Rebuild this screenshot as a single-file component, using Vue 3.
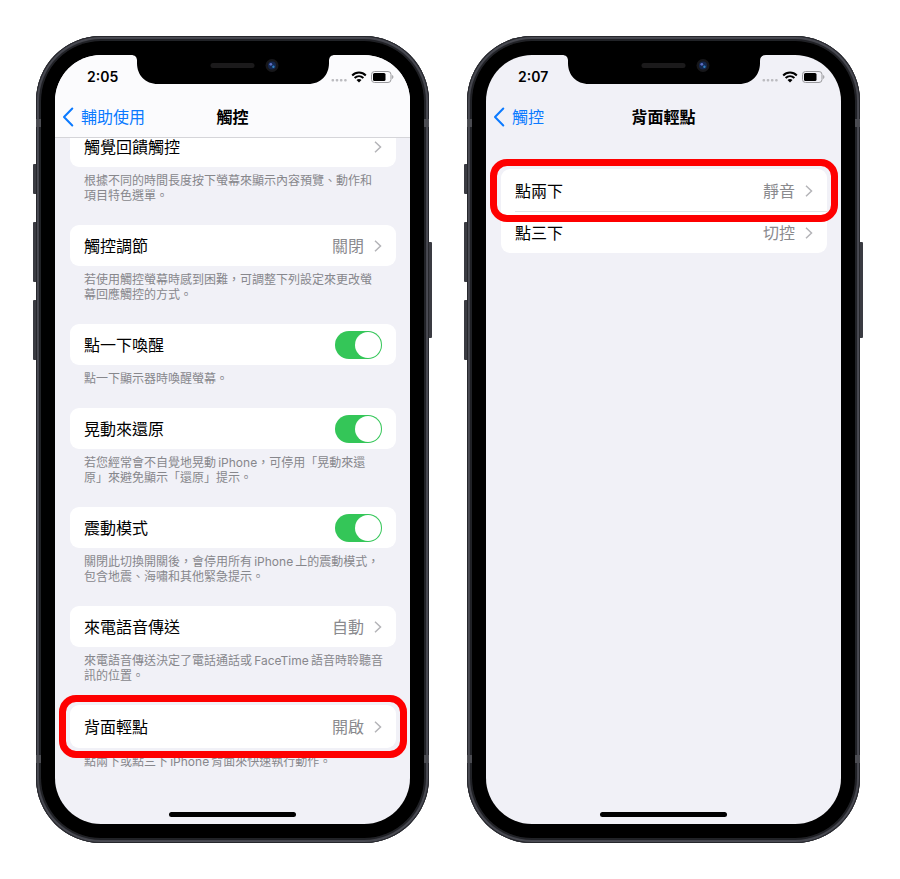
<script setup>
import { ref } from 'vue'

const phones = ref([
  {
    id: 'touch',
    time: '2:05',
    back: '輔助使用',
    title: '觸控',
    scrolled: true,
    groups: [
      {
        rows: [{ label: '觸覺回饋觸控', value: '' }],
        note: '根據不同的時間長度按下螢幕來顯示內容預覽、動作和項目特色選單。'
      },
      {
        rows: [{ label: '觸控調節', value: '關閉' }],
        note: '若使用觸控螢幕時感到困難，可調整下列設定來更改螢幕回應觸控的方式。'
      },
      {
        rows: [{ label: '點一下喚醒', toggle: true, on: true }],
        note: '點一下顯示器時喚醒螢幕。'
      },
      {
        rows: [{ label: '晃動來還原', toggle: true, on: true }],
        note: '若您經常會不自覺地晃動\u2009iPhone，可停用「晃動來還原」來避免顯示「還原」提示。'
      },
      {
        rows: [{ label: '震動模式', toggle: true, on: true }],
        note: '關閉此切換開關後，會停用所有\u2009iPhone\u2009上的震動模式，包含地震、海嘯和其他緊急提示。'
      },
      {
        rows: [{ label: '來電語音傳送', value: '自動' }],
        note: '來電語音傳送決定了電話通話或\u2009FaceTime\u2009語音時聆聽音訊的位置。'
      },
      {
        rows: [{ label: '背面輕點', value: '開啟', marked: true }],
        note: '點兩下或點三下\u2009iPhone\u2009背面來快速執行動作。'
      }
    ]
  },
  {
    id: 'backtap',
    time: '2:07',
    back: '觸控',
    title: '背面輕點',
    scrolled: false,
    groups: [
      {
        rows: [
          { label: '點兩下', value: '靜音', marked: true },
          { label: '點三下', value: '切控' }
        ],
        note: ''
      }
    ]
  }
])
</script>

<template>
  <main class="stage">
    <section v-for="phone in phones" :key="phone.id" class="phone">
      <span class="key key-mute"></span>
      <span class="key key-up"></span>
      <span class="key key-down"></span>
      <span class="key key-power"></span>
      <span class="band band-left"></span>
      <span class="band band-right"></span>
      <span class="band band-left band-low"></span>
      <span class="band band-right band-low"></span>
      <div class="bezel">
        <div class="screen">
          <header class="top" :class="{ scrolled: phone.scrolled }">
            <div class="status">
              <span class="time">{{ phone.time }}</span>
              <span class="indicators">
                <svg class="dots" viewBox="0 0 16 3" aria-hidden="true">
                  <rect x="0.5" y="0" width="2.6" height="2.6" rx="1" />
                  <rect x="4.7" y="0" width="2.6" height="2.6" rx="1" />
                  <rect x="8.900" y="0" width="2.6" height="2.6" rx="1" />
                  <rect x="13.1" y="0" width="2.6" height="2.6" rx="1" />
                </svg>
                <svg class="wifi" viewBox="0 0 16 12" aria-hidden="true">
                  <path d="M1.2 4.5C5 .6 11 .6 14.8 4.5" />
                  <path d="M3.6 7C6.2 4.5 9.8 4.5 12.4 7" />
                  <path class="solid" d="M5.5 9C7 7.7 9 7.7 10.5 9L8 11.6Z" />
                </svg>
                <svg class="battery" viewBox="0 0 23 12" aria-hidden="true">
                  <rect class="shell" x=".5" y=".5" width="19.5" height="11" rx="3" />
                  <rect x="2" y="2" width="12.5" height="8" rx="1.5" />
                  <path class="tip" d="M21.2 4C22.8 4.5 22.8 7.500 21.2 8Z" />
                </svg>
              </span>
            </div>
            <nav class="bar">
              <a class="back" href="#">
                <svg viewBox="0 0 12 20" aria-hidden="true"><path d="M10.300 1.500L2 10L10.300 18.500" /></svg>
                <span>{{ phone.back }}</span>
              </a>
              <h1 class="title">{{ phone.title }}</h1>
            </nav>
          </header>

          <div class="list" :class="{ under: phone.scrolled }">
            <section v-for="(group, g) in phone.groups" :key="g" class="group">
              <div class="card">
                <template v-for="row in group.rows" :key="row.label">
                  <label v-if="row.toggle" class="row">
                    <span class="label">{{ row.label }}</span>
                    <input v-model="row.on" class="switch" type="checkbox" role="switch" />
                  </label>
                  <a v-else class="row" :class="{ marked: row.marked }" href="#">
                    <span class="label">{{ row.label }}</span>
                    <span class="value">{{ row.value }}</span>
                    <svg class="chevron" viewBox="0 0 8 12" aria-hidden="true"><path d="M1 .8L6.500 6L1 11.200" /></svg>
                  </a>
                </template>
              </div>
              <p v-if="group.note" class="note">{{ group.note }}</p>
            </section>
          </div>

          <div class="home"></div>

          <svg class="notch" viewBox="0 0 204 30" aria-hidden="true">
            <path d="M0 0C4 0 6 2 6 6V8C6 20 14 29 27 29H177C190 29 198 20 198 8V6C198 2 200 0 204 0Z" />
            <rect class="speaker" x="79.500" y="8" width="44" height="5" rx="2.500" />
            <circle class="ring" cx="141" cy="10.500" r="6.500" />
            <circle class="lens" cx="141" cy="10.500" r="4" />
            <circle class="glow" cx="139.800" cy="9.300" r="1.400" />
            <circle class="glint" cx="142.400" cy="11.700" r="1.200" />
          </svg>
        </div>
      </div>
    </section>
  </main>
</template>

<style>
body {
  margin: 0;
  background: #fff;
}
</style>

<style scoped>
.stage {
  box-sizing: border-box;
  min-height: 100vh;
  display: flex;
  gap: 38px;
  padding: 36px 40px 36px 36px;
  font-family: Inter, "Noto Sans CJK TC", sans-serif;
  color: #000;
}

.phone {
  position: relative;
  flex: 1;
  min-width: 0;
  display: flex;
  box-sizing: border-box;
  padding: 5px;
  border-radius: 65px;
  background: #34353c;
  box-shadow: inset 0 0 0 1px #26272c, inset 0 0 1px 3px #4a4b53, inset 0 0 2px 5px #1c1d21;
}

.bezel {
  flex: 1;
  min-width: 0;
  display: flex;
  padding: 14px;
  border-radius: 60px;
  background: #000;
}

.screen {
  position: relative;
  flex: 1;
  min-width: 0;
  display: flex;
  flex-direction: column;
  overflow: hidden;
  border-radius: 46px;
  background: #f1f1f7;
}

.key {
  position: absolute;
  left: -3px;
  width: 3px;
  background: #3a3b42;
  border-radius: 1px 0 0 1px;
}

.key-mute {
  top: 128px;
  height: 30px;
}

.key-up {
  top: 186px;
  height: 60px;
}

.key-down {
  top: 264px;
  height: 60px;
}

.key-power {
  left: auto;
  right: -3px;
  top: 206px;
  height: 96px;
  border-radius: 0 1px 1px 0;
}

.band {
  position: absolute;
  top: 83px;
  width: 5px;
  height: 8px;
  background: #4b4c52;
}

.band-left {
  left: 0;
}

.band-right {
  right: 0;
}

.band-low {
  top: auto;
  bottom: 80px;
}

.notch {
  position: absolute;
  z-index: 3;
  top: 0;
  left: 50%;
  width: 204px;
  height: 30px;
  margin-left: -102px;
}

.speaker {
  fill: #1b1a1b;
}

.ring {
  fill: #17171a;
}

.lens {
  fill: #14264d;
}

.glow {
  fill: #5b6fc4;
}

.glint {
  fill: #2f7fc0;
}

.top {
  position: relative;
  z-index: 2;
  box-sizing: border-box;
  height: 83px;
  padding-top: 12px;
  border-bottom: 1px solid transparent;
}

.top.scrolled {
  background: #fbfbfd;
  border-bottom-color: #d5d5d9;
}

.status {
  display: flex;
  justify-content: space-between;
  align-items: center;
  height: 20px;
  padding: 0 16px 0 32px;
}

.time {
  font-size: 14px;
  line-height: 20px;
  font-weight: 600;
}

.indicators {
  display: flex;
  align-items: center;
  gap: 4px;
}

.dots {
  width: 16px;
  height: 3px;
  margin-top: 7px;
  fill: #bcbcc0;
}

.wifi {
  width: 16px;
  height: 12px;
  fill: none;
  stroke: #000;
  stroke-width: 2;
}

.wifi .solid {
  fill: #000;
  stroke: none;
}

.battery {
  width: 23px;
  height: 12px;
  fill: #000;
}

.battery .shell {
  fill: none;
  stroke: #98989c;
}

.battery .tip {
  fill: #98989c;
}

.bar {
  display: grid;
  grid-template-columns: 1fr auto 1fr;
  align-items: center;
  height: 38px;
  margin-top: 11px;
  padding: 0 7px;
}

.back {
  display: flex;
  align-items: center;
  gap: 7px;
  color: #0b7aff;
  font-size: 16px;
  line-height: 24px;
  text-decoration: none;
  white-space: nowrap;
}

.back svg {
  width: 12px;
  height: 20px;
  fill: none;
  stroke: #0b7aff;
  stroke-width: 2;
  stroke-linecap: round;
  stroke-linejoin: round;
}

.title {
  margin: 0;
  font-size: 16px;
  line-height: 24px;
  font-weight: 700;
  white-space: nowrap;
}

.list {
  flex: 1;
  padding: 31px 14px 0 15px;
}

.list.under {
  margin-top: -12px;
  padding-top: 0;
}

.group {
  margin-bottom: 22px;
}

.card {
  border-radius: 9px;
  background: #fff;
}

.row {
  position: relative;
  display: flex;
  align-items: center;
  box-sizing: border-box;
  min-height: 41px;
  padding: 0 14px;
  color: #000;
  font-size: 16px;
  line-height: 24px;
  text-decoration: none;
}

.row + .row::before {
  content: "";
  position: absolute;
  top: -1px;
  left: 14px;
  right: 0;
  height: 1px;
  background: #e3e3e6;
}

.marked {
  min-height: 43px;
}

.marked::after {
  content: "";
  position: absolute;
  z-index: 1;
  inset: -10px -11px;
  border: 7px solid #fe0000;
  border-radius: 17px;
}

.label {
  flex: 1;
}

.value {
  color: #8a8a8e;
}

.chevron {
  width: 8px;
  height: 12px;
  margin-left: 10px;
  fill: none;
  stroke: #b4b4b8;
  stroke-width: 1.5;
}

.switch {
  appearance: none;
  position: relative;
  width: 47px;
  height: 28px;
  margin: 0;
  border-radius: 14px;
  background: #e4e4e8;
}

.switch::before {
  content: "";
  position: absolute;
  top: 1px;
  left: 1px;
  width: 26px;
  height: 26px;
  border-radius: 50%;
  background: #fff;
}

.switch:checked {
  background: #34c658;
}

.switch:checked::before {
  left: 20px;
}

.note {
  margin: 6px 0 0;
  padding: 0 13px 0 14px;
  color: #87878c;
  font-size: 12px;
  line-height: 15px;
}

.home {
  align-self: center;
  width: 127px;
  height: 5px;
  margin-bottom: 7px;
  border-radius: 3px;
  background: #000;
}
</style>
